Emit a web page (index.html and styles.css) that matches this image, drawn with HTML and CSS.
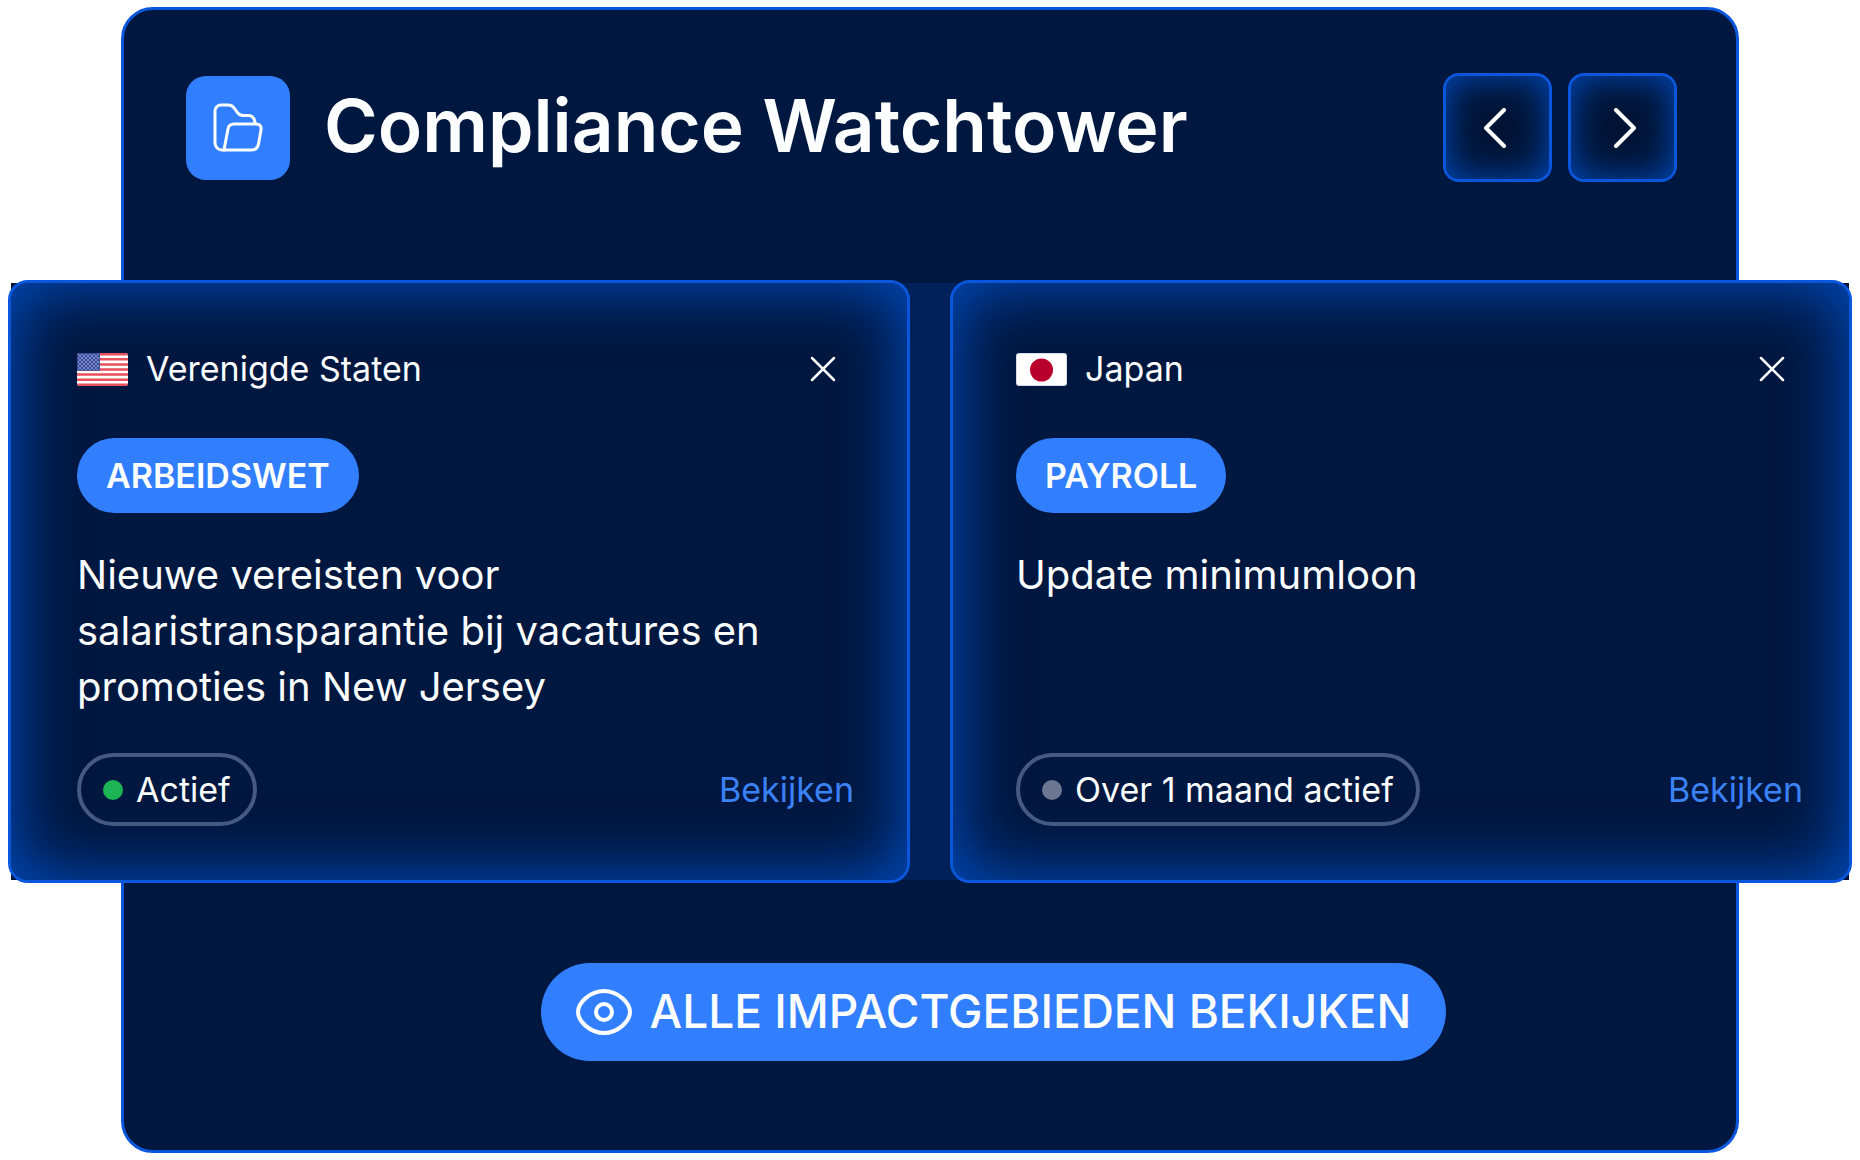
FILE: index.html
```html
<!DOCTYPE html>
<html lang="nl">
<head>
<meta charset="utf-8">
<meta name="viewport" content="width=device-width, initial-scale=1">
<title>Compliance Watchtower</title>
<link rel="stylesheet" href="styles.css">
</head>
<body>
<main class="panel">
  <header class="panel-header">
    <span class="panel-icon">
      <svg width="52" height="52" viewBox="0 0 52 52" fill="none" stroke="currentColor" stroke-width="3" stroke-linecap="round" stroke-linejoin="round" aria-hidden="true">
        <path d="M12 48h-2a7 7 0 0 1-7-7V9a6 6 0 0 1 6-6h7c3 0 5 1 6.500 3.500l2.500 3.500c1.500 2.500 3 3.500 6 3.500h5c4 0 6.500 2.500 7 7"/>
        <path d="M12 48l4-21c.6-3.500 2.500-5 6-5h22c4 0 5.600 2.500 5 6l-2.500 14c-.7 4-3 6-7 6z"/>
      </svg>
    </span>
    <h1 class="panel-title">Compliance Watchtower</h1>
    <nav class="pager" aria-label="Bladeren">
      <button class="pager-button" type="button" aria-label="Vorige">
        <svg width="40" height="40" viewBox="0 0 40 40" fill="none" stroke="currentColor" stroke-width="4" stroke-linecap="round" stroke-linejoin="round" aria-hidden="true"><path d="M26 2L8 20l18 18"/></svg>
      </button>
      <button class="pager-button" type="button" aria-label="Volgende">
        <svg width="40" height="40" viewBox="0 0 40 40" fill="none" stroke="currentColor" stroke-width="4" stroke-linecap="round" stroke-linejoin="round" aria-hidden="true"><path d="M13 2l18 18-18 18"/></svg>
      </button>
    </nav>
  </header>

  <section class="cards">
    <article class="card card-us">
      <div class="card-head">
        <svg class="flag" width="51" height="33" viewBox="0 0 51 33" aria-hidden="true">
          <defs>
            <clipPath id="flag-shape"><rect width="51" height="33" rx="3"/></clipPath>
            <pattern id="stars" width="4" height="4" patternUnits="userSpaceOnUse"><circle cx="1" cy="1" r=".7" fill="#dfe6fa"/><circle cx="3" cy="3" r=".7" fill="#dfe6fa"/></pattern>
          </defs>
          <g clip-path="url(#flag-shape)">
            <rect width="51" height="33" fill="#fff"/>
            <path d="M0 1.270h51M0 6.350h51M0 11.420h51M0 16.500h51M0 21.580h51M0 26.650h51M0 31.730h51" stroke="#e8505b" stroke-width="2.540"/>
            <rect width="23" height="17.800" fill="#3a4f9e"/>
            <rect x="1" y="1" width="21" height="16" fill="url(#stars)"/>
          </g>
        </svg>
        <h2 class="country">Verenigde Staten</h2>
        <button class="close" type="button" aria-label="Sluiten">
          <svg width="26" height="26" viewBox="0 0 26 26" fill="none" stroke="currentColor" stroke-width="2.500" stroke-linecap="round" aria-hidden="true"><path d="M2 2l22 22M24 2L2 24"/></svg>
        </button>
      </div>
      <span class="tag">ARBEIDSWET</span>
      <p class="summary">Nieuwe vereisten voor<br>salaristransparantie bij vacatures en<br>promoties in New Jersey</p>
      <div class="card-foot">
        <span class="status"><i class="dot dot-active"></i>Actief</span>
        <a class="view" href="#">Bekijken</a>
      </div>
    </article>

    <article class="card card-jp">
      <div class="card-head">
        <svg class="flag" width="51" height="33" viewBox="0 0 51 33" aria-hidden="true">
          <rect width="51" height="33" rx="3" fill="#d5dcec"/>
          <rect x="1" y="1" width="49" height="31" rx="2" fill="#fff"/>
          <circle cx="25.500" cy="17" r="11.500" fill="#b9002d"/>
        </svg>
        <h2 class="country">Japan</h2>
        <button class="close" type="button" aria-label="Sluiten">
          <svg width="26" height="26" viewBox="0 0 26 26" fill="none" stroke="currentColor" stroke-width="2.500" stroke-linecap="round" aria-hidden="true"><path d="M2 2l22 22M24 2L2 24"/></svg>
        </button>
      </div>
      <span class="tag">PAYROLL</span>
      <p class="summary">Update minimumloon</p>
      <div class="card-foot">
        <span class="status"><i class="dot"></i>Over 1 maand actief</span>
        <a class="view" href="#">Bekijken</a>
      </div>
    </article>
  </section>

  <footer class="panel-footer">
    <button class="view-all" type="button">
      <svg width="56" height="48" viewBox="0 0 56 48" fill="none" stroke="currentColor" stroke-width="4" aria-hidden="true">
        <path d="M28 3C14 3 2 15 2 24S14 45 28 45s26-12 26-21S42 3 28 3z"/>
        <circle cx="28" cy="24" r="8"/>
      </svg>
      <span class="view-all-label">ALLE IMPACTGEBIEDEN BEKIJKEN</span>
    </button>
  </footer>
</main>
</body>
</html>
```

FILE: styles.css
```css
:root {
  --navy: #00173f;
  --line: #0a57dc;
  --blue: #317fff;
  --glow: #004bbd;
}

* {
  box-sizing: border-box;
}

body {
  margin: 0;
  padding: 7px 121px;
  background: #fff;
  color: #fbfdff;
  font-family: Inter, "Liberation Sans", sans-serif;
}

h1, h2, p {
  margin: 0;
}

button {
  border: 0;
  padding: 0;
  background: none;
  color: inherit;
  font: inherit;
  cursor: pointer;
}

svg {
  display: block;
}

.panel {
  border: 3px solid var(--line);
  border-radius: 32px;
  background: var(--navy);
}

.panel-header {
  display: flex;
  align-items: center;
  padding: 63px 59px 98px 62px;
}

.panel-icon {
  display: grid;
  place-items: center;
  width: 104px;
  height: 104px;
  border-radius: 20px;
  background: var(--blue);
}

.panel-title {
  flex: 1;
  margin-left: 34px;
  padding-bottom: 4px;
  font-size: 73px;
  font-weight: 600;
  line-height: 92px;
  white-space: nowrap;
}

.pager {
  display: flex;
  gap: 16px;
}

.pager-button {
  display: grid;
  place-items: center;
  width: 109px;
  height: 109px;
  border: 3px solid var(--line);
  border-radius: 16px;
  background: #001435;
  box-shadow: inset 0 0 36px var(--glow);
}

.cards {
  display: grid;
  grid-template-columns: 1fr 1fr;
  gap: 40px;
  margin: 0 -116px;
  background: linear-gradient(90deg, #00153c, #002159 45%, #002159 55%, #00153c) center / calc(100% - 6px) calc(100% - 6px) no-repeat;
}

.card {
  display: flex;
  flex-direction: column;
  align-items: flex-start;
  border: 3px solid var(--line);
  border-radius: 20px;
  background: var(--navy);
  box-shadow: inset 0 0 64px 5px var(--glow);
}

.card-us {
  padding: 66px 53px 54px 66px;
}

.card-jp {
  padding: 66px 46px 54px 63px;
}

.card-head {
  display: flex;
  align-items: center;
  align-self: stretch;
  height: 40px;
}

.country {
  flex: 1;
  margin-left: 18px;
  font-size: 34px;
  font-weight: 400;
  line-height: 40px;
}

.close {
  margin-right: 18px;
}

.tag {
  margin-top: 49px;
  padding: 0 29px;
  border-radius: 38px;
  background: var(--blue);
  font-size: 34px;
  font-weight: 600;
  line-height: 75px;
}

.summary {
  margin: 34px 0 38px;
  font-size: 40px;
  line-height: 56px;
}

.card-foot {
  display: flex;
  align-items: center;
  justify-content: space-between;
  align-self: stretch;
  margin-top: auto;
}

.status {
  display: flex;
  align-items: center;
  gap: 13px;
  height: 73px;
  padding: 0 22px;
  border: 4px solid #455a82;
  border-radius: 37px;
  font-size: 34px;
}

.dot {
  width: 20px;
  height: 20px;
  border-radius: 50%;
  background: #6b7690;
}

.dot-active {
  background: #1cb454;
}

.view {
  color: #3b82f6;
  font-size: 34px;
  text-decoration: none;
}

.panel-footer {
  display: flex;
  justify-content: center;
  padding: 80px 0 89px 127px;
}

.view-all {
  display: flex;
  align-items: center;
  gap: 18px;
  height: 98px;
  padding: 0 35px;
  border-radius: 49px;
  background: var(--blue);
  font-size: 46px;
  font-weight: 500;
  white-space: nowrap;
}

.view-all-label {
  padding-bottom: 3px;
}
```
